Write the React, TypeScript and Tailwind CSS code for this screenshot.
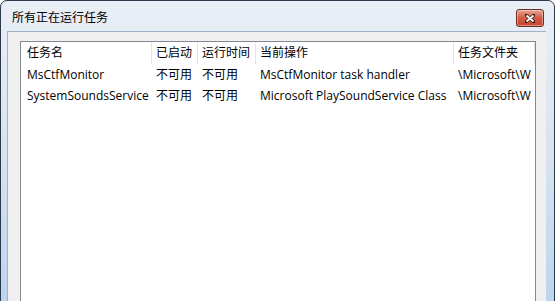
const font = { fontFamily: '"Segoe UI", "Open Sans", "Noto Sans CJK SC", sans-serif' }

const cols = [
  { label: '任务名', w: 'w-[131px] shrink-0 pl-[6px]' },
  { label: '已启动', w: 'w-[46px] shrink-0 pl-[4px]' },
  { label: '运行时间', w: 'w-[58px] shrink-0 pl-[4px]' },
  { label: '当前操作', w: 'w-[198px] shrink-0 pl-[4px]' },
  { label: '任务文件夹', w: 'flex-1 min-w-0 pl-[4px]' },
]

const rows = [
  ['MsCtfMonitor', '不可用', '不可用', 'MsCtfMonitor task handler', '\\Microsoft\\W'],
  ['SystemSoundsService', '不可用', '不可用', 'Microsoft PlaySoundService Class', '\\Microsoft\\W'],
]

export default function App() {
  return (
    <div className="w-[555px] h-[301px] overflow-hidden bg-white text-[12px] text-black" style={font}>
      <div className="w-[555px] h-[310px] flex flex-col rounded-t-[7px] border border-[#2b3a4a] bg-gradient-to-b from-[#eaeff6] via-[#d8e3f0] to-[#bcd3ee]">
        <div className="h-[30px] flex items-center justify-between pl-[11px] pr-[10px]">
          <span className="mt-[4px]">所有正在运行任务</span>
          <div className="mt-[4px] w-[28px] h-[18px] rounded-[3px] border border-[#6b2b20] bg-gradient-to-b from-[#e6a596] via-[#cf5a43] to-[#c8442c] flex items-center justify-center shadow-[inset_0_0_0_1px_rgba(255,255,255,0.4)]">
            <svg width="10" height="9" viewBox="0 0 10 9">
              <path d="M1 1 L9 8 M9 1 L1 8" stroke="#3b1a14" strokeWidth="3.2" strokeLinecap="square" />
              <path d="M1.5 1.5 L8.5 7.5 M8.5 1.5 L1.5 7.5" stroke="#fff" strokeWidth="1.8" />
            </svg>
          </div>
        </div>
        <div className="flex-1 ml-[6px] w-[539px] border-t border-l border-[#9fb2c8] bg-[#f0f0f0] pl-[12px] pt-[9px] flex flex-col">
          <div className="flex-1 w-[516px] border border-[#828790] bg-white overflow-hidden">
            <div className="flex h-[22px] items-center whitespace-nowrap">
              {cols.map((c, i) => (
                <div
                  key={i}
                  className={`${c.w} h-full flex items-center border-r border-[#e5e5e5] overflow-hidden`}
                >
                  {c.label}
                </div>
              ))}
            </div>
            {rows.map((r, ri) => (
              <div key={ri} className="flex h-[21px] items-center whitespace-nowrap">
                {r.map((t, i) => (
                  <div key={i} className={`${cols[i].w} overflow-hidden`}>
                    {t}
                  </div>
                ))}
              </div>
            ))}
          </div>
        </div>
      </div>
    </div>
  )
}
